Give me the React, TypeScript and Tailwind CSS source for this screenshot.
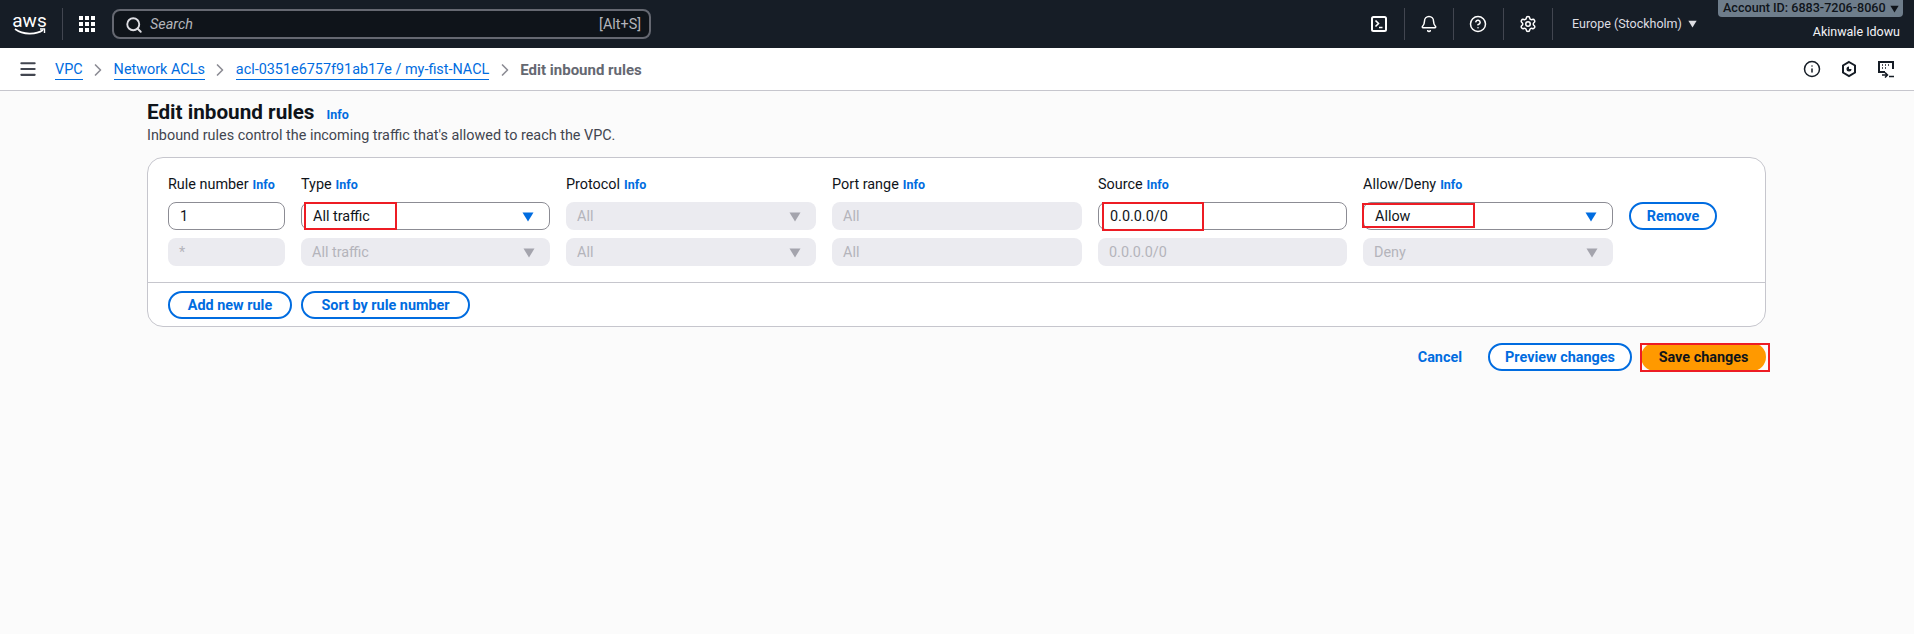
import React from "react";
import { Bell, ChevronRight, CircleHelp, Info as InfoIcon, Menu, Search, Settings } from "lucide-react";

const inputBase = "flex h-[28px] items-center rounded-lg px-[11px] pt-[2px] text-[14.4px]";
const enabled = "border border-[#8c8c94] bg-white text-[#0f141a]";
const disabled = "bg-[#ebebf0] text-[#b4b4bb]";
const pillBtn = "flex h-[28px] items-center justify-center rounded-full border-2 border-[#006ce0] bg-white pt-[1px] text-[14.4px] font-bold text-[#006ce0]";

function Info({ className = "" }: { className?: string }) {
  return <span className={`text-[12.5px] font-bold text-[#006ce0] ${className}`}>Info</span>;
}

function Caret({ off = false }: { off?: boolean }) {
  return (
    <svg width="12" height="10" viewBox="0 0 12 10" className={off ? "fill-[#a4a4ad]" : "fill-[#006ce0]"}>
      <path d="M0.5 0.5h11L6 9.5z" />
    </svg>
  );
}

function Select({ value, off = false }: { value: string; off?: boolean }) {
  return (
    <div className={`${inputBase} justify-between pr-[15px] ${off ? disabled : enabled}`}>
      <span>{value}</span>
      <Caret off={off} />
    </div>
  );
}

function Field({ value, off = false }: { value: string; off?: boolean }) {
  return <div className={`${inputBase} ${off ? disabled : enabled}`}>{value}</div>;
}

function Label({ text }: { text: string }) {
  return (
    <div className="flex h-[19px] items-center gap-1 pt-[1px] text-[14.4px] text-[#0f141a]">
      {text} <Info />
    </div>
  );
}

function HeaderIcon({ children }: { children: React.ReactNode }) {
  return (
    <div className="flex h-[32px] w-[49.5px] items-center justify-center border-r border-[#424650] text-white">
      {children}
    </div>
  );
}

function Crumb({ text }: { text: string }) {
  return (
    <>
      <span className="border-b border-[#006ce0] leading-[18px] text-[#006ce0]">{text}</span>
      <ChevronRight size={20} strokeWidth={2} className="mx-[5.5px] text-[#8c8c94]" />
    </>
  );
}

export default function App() {
  return (
    <div className="min-h-[634px] bg-[#fbfbfb] font-['Roboto',sans-serif]">
      {/* top bar */}
      <header className="flex h-[48px] items-center bg-[#161d26]">
        <div className="flex h-[32px] w-[63px] flex-col items-center justify-center border-r border-[#424650] pr-[3px]">
          <span className="text-[19px] leading-[15px] text-white">aws</span>
          <svg width="32" height="8" viewBox="0 0 32 8" fill="none">
            <path d="M1 1c8 6 21 6 28 1" stroke="white" strokeWidth="1.6" />
            <path d="M26 1h4.500v4" stroke="white" strokeWidth="1.400" />
          </svg>
        </div>
        <div className="ml-[16px] grid w-[16px] grid-cols-3 gap-[2px]">
          {Array.from({ length: 9 }).map((_, i) => (
            <span key={i} className="h-[4px] w-[4px] bg-white" />
          ))}
        </div>
        <div className="ml-[17px] flex h-[30px] w-[539px] items-center rounded-lg border-2 border-[#656871] bg-[#0f141a] pl-[11px] pr-[8px] pt-[1px] text-[14.4px] text-[#b4b4bb]">
          <Search size={18} strokeWidth={2.500} className="text-[#dedee3]" />
          <span className="ml-[7px] italic">Search</span>
          <span className="ml-auto">[Alt+S]</span>
        </div>
        <div className="ml-[704px] flex items-center">
          <HeaderIcon>
            <svg width="18" height="18" viewBox="0 0 18 18" fill="none" stroke="white" strokeWidth="2">
              <rect x="2" y="2" width="14" height="14" rx="1.500" />
              <path d="M5.500 5.500 8.500 8.500 5.500 11.500M9 12.500h3.500" strokeWidth="1.600" />
            </svg>
          </HeaderIcon>
          <HeaderIcon>
            <Bell size={18} strokeWidth={2} />
          </HeaderIcon>
          <HeaderIcon>
            <CircleHelp size={18} strokeWidth={2} />
          </HeaderIcon>
          <HeaderIcon>
            <Settings size={18} strokeWidth={2} />
          </HeaderIcon>
          <span className="ml-[19px] text-[12.5px] text-[#dedee3]">Europe (Stockholm)</span>
          <svg width="9" height="8" viewBox="0 0 12 10" className="ml-[6px] fill-[#dedee3]">
            <path d="M0.5 0.5h11L6 9.5z" />
          </svg>
        </div>
        <div className="ml-auto flex h-[48px] flex-col items-end self-start pr-[11px]">
          <div className="flex h-[17px] w-[185px] items-center whitespace-nowrap rounded-b-[4px] bg-[#6e7d8b] pl-[5px] text-[12.6px] font-medium text-[#0f141a]">
            Account ID: 6883-7206-8060
            <svg width="9" height="8" viewBox="0 0 12 10" className="ml-[4px] shrink-0 fill-[#0f141a]">
              <path d="M0.5 0.5h11L6 9.5z" />
            </svg>
          </div>
          <span className="mr-[3px] mt-[6px] text-[12.5px] leading-[18px] text-[#f3f3f7]">Akinwale Idowu</span>
        </div>
      </header>

      {/* breadcrumb bar */}
      <nav className="flex h-[43px] items-center border-b border-[#c6c6cd] bg-white pt-[2px] text-[14.4px]">
        <Menu size={20} strokeWidth={2.500} className="mb-[2px] ml-[18px] mr-[17px] text-[#424650]" />
        <Crumb text="VPC" />
        <Crumb text="Network ACLs" />
        <Crumb text="acl-0351e6757f91ab17e / my-fist-NACL" />
        <span className="text-[15px] font-bold text-[#656871]">Edit inbound rules</span>
        <div className="mb-[2px] ml-auto mr-[19px] flex items-center gap-[19px] text-[#161d26]">
          <InfoIcon size={18} strokeWidth={2} />
          <svg width="18" height="18" viewBox="0 0 18 18" fill="none" stroke="currentColor" strokeWidth="2">
            <path d="M9 2 15 5.500v7L9 16 3 12.500v-7z" />
            <path d="M9 6.500a2.500 2.500 0 1 0 2.500 2.500H9z" fill="currentColor" stroke="none" />
          </svg>
          <svg width="18" height="18" viewBox="0 0 18 18" fill="none" stroke="currentColor" strokeWidth="2">
            <path d="M8 12H2V2h14v7" />
            <path d="M5 5h1M8 5h1M11 5h1M5 8h1M8 8h1" strokeWidth="1.500" />
            <path d="M5 15h5M8 12.500 10.500 15 8 17.500M12 16.500h5" strokeWidth="1.500" />
          </svg>
        </div>
      </nav>

      <main className="relative ml-[147px] w-[1619px]">
        <div className="flex h-[28px] items-center pt-[15px]">
          <h1 className="text-[20.7px] font-bold text-[#0f141a]">Edit inbound rules</h1>
          <Info className="ml-3 mt-[5px]" />
        </div>
        <p className="mt-[7px] h-[20px] text-[14.4px] leading-[20px] text-[#424650]">
          Inbound rules control the incoming traffic that's allowed to reach the VPC.
        </p>

        {/* rules card */}
        <section className="mt-[11px] h-[170px] rounded-2xl border border-[#c6c6cd] bg-white">
          <div className="grid grid-cols-[117px_249px_250px_250px_249px_250px_88px] gap-x-4 gap-y-2 px-5 pt-[17px]">
            <Label text="Rule number" />
            <Label text="Type" />
            <Label text="Protocol" />
            <Label text="Port range" />
            <Label text="Source" />
            <Label text="Allow/Deny" />
            <div />
            <Field value="1" />
            <Select value="All traffic" />
            <Select value="All" off />
            <Field value="All" off />
            <Field value="0.0.0.0/0" />
            <Select value="Allow" />
            <div className={pillBtn}>Remove</div>
            <Field value="*" off />
            <Select value="All traffic" off />
            <Select value="All" off />
            <Field value="All" off />
            <Field value="0.0.0.0/0" off />
            <Select value="Deny" off />
          </div>
          <div className="mt-[16px] flex h-[45px] items-center gap-[9px] border-t border-[#c6c6cd] px-5">
            <div className={`${pillBtn} w-[124px]`}>Add new rule</div>
            <div className={`${pillBtn} w-[169px]`}>Sort by rule number</div>
          </div>
        </section>

        {/* footer actions */}
        <div className="mt-[16px] flex items-center justify-end">
          <span className="mr-[26px] pt-[1px] text-[14.4px] font-bold text-[#006ce0]">Cancel</span>
          <div className={`${pillBtn} w-[144px]`}>Preview changes</div>
          <div className="ml-[9px] flex h-[28px] w-[125px] items-center justify-center rounded-full bg-[#ff9900] pt-[1px] text-[14.4px] font-bold text-[#0f141a]">
            Save changes
          </div>
        </div>

        {/* red highlight boxes added on the screenshot */}
        <div className="absolute left-[157px] top-[111px] h-[28px] w-[93px] border-2 border-[#ed1c24]" />
        <div className="absolute left-[955px] top-[111px] h-[29px] w-[102px] border-2 border-[#ed1c24]" />
        <div className="absolute left-[1215px] top-[112px] h-[25px] w-[113px] border-2 border-[#ed1c24]" />
        <div className="absolute left-[1493px] top-[252px] h-[29px] w-[130px] border-2 border-[#ed1c24]" />
      </main>
    </div>
  );
}
